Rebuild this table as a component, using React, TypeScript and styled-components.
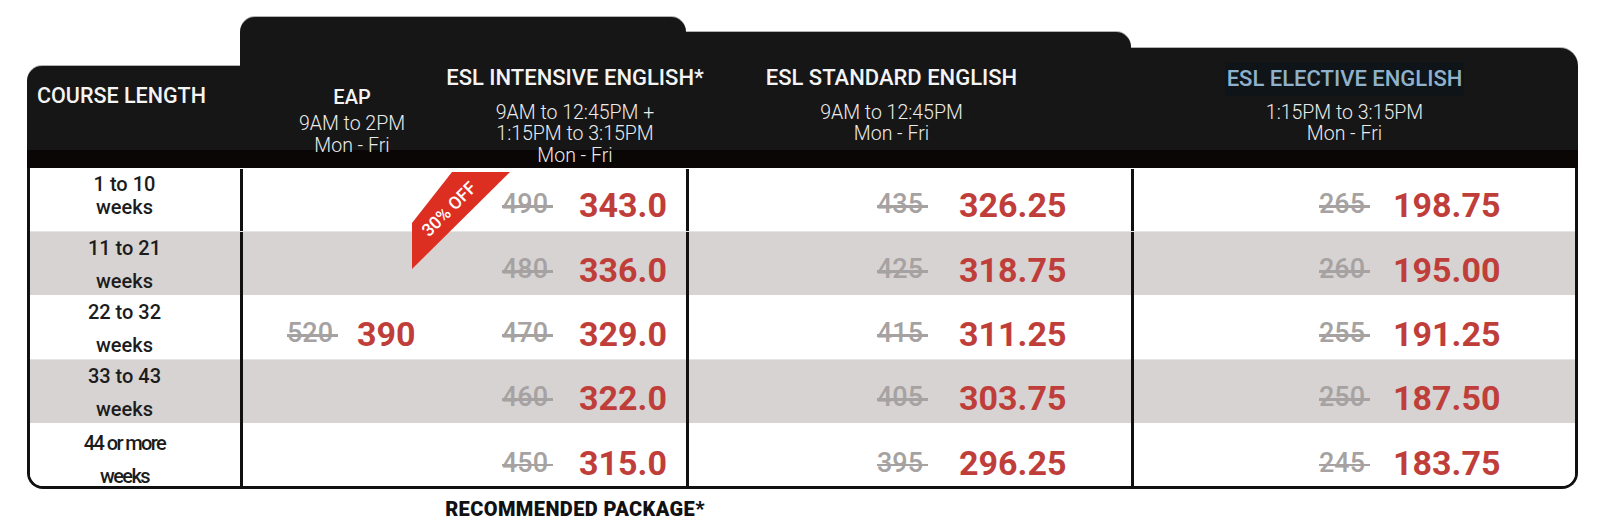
import React from "react";
import styled, { createGlobalStyle } from "styled-components";

const GlobalStyle = createGlobalStyle`
  html, body {
    margin: 0;
    padding: 0;
    background: #ffffff;
  }
  body {
    font-family: Roboto, "Noto Sans", "Liberation Sans", sans-serif;
  }
`;

const HEAD_COLUMNS = "213px 224px 222px 445px 447px";
const BODY_COLUMNS = "210px 224px 222px 445px 444px";

const Page = styled.div`
  padding: 17px 0 0 27px;
`;

const Table = styled.div`
  position: relative;
  width: 1551px;
  display: flex;
  flex-direction: column;
`;

const HeadRow = styled.div`
  display: grid;
  grid-template-columns: ${HEAD_COLUMNS};
  align-items: end;
  height: 151px;
`;

const Tab = styled.div<{
  $height: number;
  $span?: number;
  $radius: string;
  $padTop?: number;
  $padRight?: number;
  $raised?: boolean;
}>`
  grid-column: span ${(p) => p.$span ?? 1};
  height: ${(p) => p.$height}px;
  box-sizing: border-box;
  background: #161616;
  border-bottom: 18px solid #0b0606;
  border-radius: ${(p) => p.$radius};
  box-shadow: 0 -1px 0 rgba(0, 0, 0, 0.3);
  padding: ${(p) => p.$padTop ?? 0}px ${(p) => p.$padRight ?? 0}px 0 0;
  color: #f2f2f2;
  display: ${(p) => (p.$span ? "grid" : "flex")};
  grid-template-columns: 224px 222px;
  flex-direction: column;
  align-items: center;
  ${(p) => p.$raised && "position: relative; z-index: 1;"}
`;

const CornerTab = styled(Tab)`
  align-items: flex-start;
  padding-left: 10px;
`;

const HeadCol = styled.div<{ $padTop: number }>`
  display: flex;
  flex-direction: column;
  align-items: center;
  padding-top: ${(p) => p.$padTop}px;
`;

const Title = styled.div<{ $size: number; $lineHeight: number }>`
  font-size: ${(p) => p.$size}px;
  line-height: ${(p) => p.$lineHeight}px;
  font-weight: 500;
  white-space: nowrap;
  color: #f4f4f4;
`;

const Highlight = styled.span`
  display: inline-block;
  background: #0e1418;
  color: #8fb1cb;
  padding: 0 2px;
`;

const Schedule = styled.div<{ $gap: number }>`
  margin-top: ${(p) => p.$gap}px;
  font-size: 19.5px;
  line-height: 21.5px;
  font-weight: 300;
  color: #ececec;
  text-align: center;
  white-space: nowrap;
`;

const Body = styled.div`
  border: 3px solid #111111;
  border-top: none;
  border-radius: 0 0 16px 16px;
  overflow: hidden;
`;

const BodyRow = styled.div<{ $shade: boolean; $height: number }>`
  display: grid;
  grid-template-columns: ${BODY_COLUMNS};
  height: ${(p) => p.$height}px;
  background: ${(p) => (p.$shade ? "#d7d3d3" : "#ffffff")};
  border-top: 1px solid ${(p) => (p.$shade ? "#e6e4e4" : "#ffffff")};
  box-sizing: border-box;
`;

const LengthCell = styled.div<{
  $lineHeight: number;
  $padTop: number;
  $condensed?: boolean;
}>`
  text-align: center;
  padding: ${(p) => p.$padTop}px 21px 0 0;
  font-size: 20px;
  font-weight: 500;
  color: #1c1c1c;
  line-height: ${(p) => p.$lineHeight}px;
  letter-spacing: ${(p) => (p.$condensed ? "-1.6px" : "0")};
  white-space: nowrap;
`;

const PriceCell = styled.div<{ $divider?: boolean; $padLeft: number }>`
  display: flex;
  align-items: center;
  box-sizing: border-box;
  border-left: ${(p) => (p.$divider ? "3px solid #111111" : "none")};
  padding: 9px 0 0 ${(p) => p.$padLeft}px;
`;

const OldSlot = styled.div<{ $width: number }>`
  width: ${(p) => p.$width}px;
  flex: none;
`;

const Struck = styled.span`
  position: relative;
  display: inline-block;
  font-size: 27px;
  line-height: 1;
  font-weight: 500;
  color: #a6a2a2;

  &::after {
    content: "";
    position: absolute;
    left: 0;
    right: -5px;
    top: 52%;
    height: 2.5px;
    background: #a6a2a2;
  }
`;

const NewPrice = styled.span`
  font-size: 34px;
  line-height: 1;
  font-weight: 700;
  color: #bf3e3a;
`;

const Ribbon = styled.div`
  position: absolute;
  left: 385px;
  top: 155px;
  width: 98px;
  height: 97px;
`;

const RibbonText = styled.span`
  position: absolute;
  left: 37px;
  top: 37px;
  transform: translate(-50%, -50%) rotate(-45deg);
  font-size: 17.5px;
  font-weight: 500;
  color: #ffffff;
  white-space: nowrap;
`;

const FootRow = styled.div`
  display: grid;
  grid-template-columns: ${HEAD_COLUMNS};
`;

const Footnote = styled.div`
  grid-column: 3;
  display: flex;
  justify-content: center;
  margin-top: 8px;
  font-size: 20px;
  line-height: 24px;
  font-weight: 900;
  letter-spacing: 0.4px;
  color: #111111;
  white-space: nowrap;
`;

type Price = [number, string];

interface RowData {
  label: [string, string];
  height: number;
  lineHeight: number;
  padTop: number;
  condensed?: boolean;
  eap?: Price;
  intensive: Price;
  standard: Price;
  elective: Price;
}

const rows: RowData[] = [
  {
    label: ["1 to 10", "weeks"],
    height: 63,
    lineHeight: 23,
    padTop: 4,
    intensive: [490, "343.0"],
    standard: [435, "326.25"],
    elective: [265, "198.75"],
  },
  {
    label: ["11 to 21", "weeks"],
    height: 64,
    lineHeight: 33,
    padTop: 0,
    intensive: [480, "336.0"],
    standard: [425, "318.75"],
    elective: [260, "195.00"],
  },
  {
    label: ["22 to 32", "weeks"],
    height: 64,
    lineHeight: 33,
    padTop: 0,
    eap: [520, "390"],
    intensive: [470, "329.0"],
    standard: [415, "311.25"],
    elective: [255, "191.25"],
  },
  {
    label: ["33 to 43", "weeks"],
    height: 64,
    lineHeight: 33,
    padTop: 0,
    intensive: [460, "322.0"],
    standard: [405, "303.75"],
    elective: [250, "187.50"],
  },
  {
    label: ["44 or more", "weeks"],
    height: 63,
    lineHeight: 33,
    padTop: 3,
    condensed: true,
    intensive: [450, "315.0"],
    standard: [395, "296.25"],
    elective: [245, "183.75"],
  },
];

const PriceGroup: React.FC<{
  price?: Price;
  padLeft: number;
  oldWidth: number;
  divider?: boolean;
}> = ({ price, padLeft, oldWidth, divider }) => (
  <PriceCell $divider={divider} $padLeft={padLeft}>
    {price && (
      <>
        <OldSlot $width={oldWidth}>
          <Struck>{price[0]}</Struck>
        </OldSlot>
        <NewPrice>{price[1]}</NewPrice>
      </>
    )}
  </PriceCell>
);

const App: React.FC = () => {
  return (
    <Page>
      <GlobalStyle />
      <Table>
        <HeadRow>
          <CornerTab $height={102} $radius="15px 0 0 0" $padTop={17}>
            <Title $size={21.5} $lineHeight={26}>
              COURSE LENGTH
            </Title>
          </CornerTab>
          <Tab $height={151} $span={2} $radius="15px 15px 0 0" $raised>
            <HeadCol $padTop={58}>
              <Title $size={20} $lineHeight={24}>
                EAP
              </Title>
              <Schedule $gap={4}>
                9AM to 2PM
                <br />
                Mon - Fri
              </Schedule>
            </HeadCol>
            <HeadCol $padTop={48}>
              <Title $size={22} $lineHeight={26}>
                ESL INTENSIVE ENGLISH*
              </Title>
              <Schedule $gap={10.5}>
                9AM to 12:45PM +
                <br />
                1:15PM to 3:15PM
                <br />
                Mon - Fri
              </Schedule>
            </HeadCol>
          </Tab>
          <Tab $height={136} $radius="0 15px 0 0" $padTop={33} $padRight={34}>
            <Title $size={22} $lineHeight={26}>
              ESL STANDARD ENGLISH
            </Title>
            <Schedule $gap={10.5}>
              9AM to 12:45PM
              <br />
              Mon - Fri
            </Schedule>
          </Tab>
          <Tab $height={120} $radius="0 18px 0 0" $padTop={14} $padRight={20}>
            <Title $size={22} $lineHeight={34}>
              <Highlight>ESL ELECTIVE ENGLISH</Highlight>
            </Title>
            <Schedule $gap={5.5}>
              1:15PM to 3:15PM
              <br />
              Mon - Fri
            </Schedule>
          </Tab>
        </HeadRow>

        <Body>
          {rows.map((row, i) => (
            <BodyRow key={row.label[0]} $shade={i % 2 === 1} $height={row.height}>
              <LengthCell
                $lineHeight={row.lineHeight}
                $padTop={row.padTop}
                $condensed={row.condensed}
              >
                {row.label[0]}
                <br />
                {row.label[1]}
              </LengthCell>
              <PriceGroup price={row.eap} padLeft={44} oldWidth={70} divider />
              <PriceGroup price={row.intensive} padLeft={38} oldWidth={77} />
              <PriceGroup price={row.standard} padLeft={188} oldWidth={82} divider />
              <PriceGroup price={row.elective} padLeft={185} oldWidth={74} divider />
            </BodyRow>
          ))}
        </Body>

        <FootRow>
          <Footnote>RECOMMENDED PACKAGE*</Footnote>
        </FootRow>

        <Ribbon>
          <svg width="98" height="97" viewBox="0 0 98 97">
            <polygon points="40,0 98,0 0,97 0,51" fill="#dd2e22" />
          </svg>
          <RibbonText>30% OFF</RibbonText>
        </Ribbon>
      </Table>
    </Page>
  );
};

export default App;
